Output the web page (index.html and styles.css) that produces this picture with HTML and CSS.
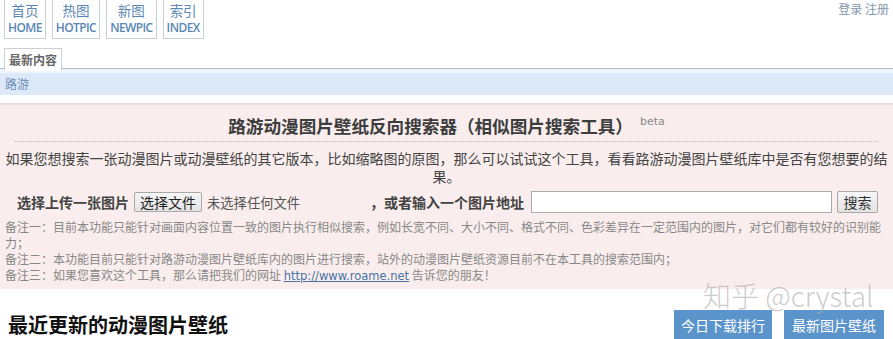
FILE: index.html
```html
<!DOCTYPE html>
<html lang="zh-CN">
<head>
<meta charset="utf-8">
<title>路游动漫图片壁纸反向搜索器</title>
<link rel="stylesheet" href="styles.css">
</head>
<body>
<div class="top">
  <ul class="nav">
    <li class="nav-item"><span class="cn">首页</span><span class="en">HOME</span></li>
    <li class="nav-item"><span class="cn">热图</span><span class="en">HOTPIC</span></li>
    <li class="nav-item"><span class="cn">新图</span><span class="en">NEWPIC</span></li>
    <li class="nav-item"><span class="cn">索引</span><span class="en">INDEX</span></li>
  </ul>
  <div class="user">登录 注册</div>
</div>
<div class="tabs"><span class="tab">最新内容</span></div>
<div class="crumb"><span class="crumb-bar">路游</span></div>

<div class="search-box">
  <h2 class="title">路游动漫图片壁纸反向搜索器（相似图片搜索工具）<sup class="beta">beta</sup></h2>
  <p class="intro">如果您想搜索一张动漫图片或动漫壁纸的其它版本，比如缩略图的原图，那么可以试试这个工具，看看路游动漫图片壁纸库中是否有您想要的结果。</p>
  <div class="form-row">
    <span class="label">选择上传一张图片</span>
    <span class="file-btn">选择文件</span>
    <span class="file-name">未选择任何文件</span>
    <span class="label label-url">，或者输入一个图片地址</span>
    <span class="url-input"></span>
    <span class="search-btn">搜索</span>
  </div>
  <div class="notes">
    <p>备注一：目前本功能只能针对画面内容位置一致的图片执行相似搜索，例如长宽不同、大小不同、格式不同、色彩差异在一定范围内的图片，对它们都有较好的识别能力；</p>
    <p>备注二：本功能目前只能针对路游动漫图片壁纸库内的图片进行搜索，站外的动漫图片壁纸资源目前不在本工具的搜索范围内；</p>
    <p>备注三：如果您喜欢这个工具，那么请把我们的网址 <a class="link" href="#">http://www.roame.net</a> 告诉您的朋友！</p>
  </div>
</div>

<div class="recent">
  <h3 class="recent-title">最近更新的动漫图片壁纸</h3>
  <div class="recent-btns">
    <span class="btn">今日下载排行</span>
    <span class="btn">最新图片壁纸</span>
  </div>
  <div class="watermark">知乎 @crystal</div>
</div>
</body>
</html>
```

FILE: styles.css
```css
* { box-sizing: border-box; }
body {
  margin: 0;
  font-family: "Noto Sans CJK SC", "Noto Sans", sans-serif;
  background: #fff;
  color: #333;
  position: relative;
}
.top {
  display: flex;
  justify-content: space-between;
  padding: 0 4px;
}
.nav {
  list-style: none;
  margin: 0;
  padding: 0;
  display: flex;
  gap: 6px;
}
.nav-item {
  display: flex;
  flex-direction: column;
  align-items: center;
  border: 1px solid #c6ced6;
  border-top: none;
  padding: 2px 3px 3px;
  height: 39px;
  color: #5a86b4;
}
.cn {
  font-size: 13.5px;
  line-height: 17px;
}
.en {
  font-family: "Open Sans", sans-serif;
  font-size: 12px;
  font-weight: 600;
  letter-spacing: -0.6px;
  line-height: 17px;
}
.user {
  font-size: 12px;
  color: #8497ad;
  line-height: 17px;
}
.tabs {
  margin-top: 7px;
  padding-left: 4px;
  border-bottom: 1px solid #aebdc8;
  height: 23px;
}
.tab {
  display: inline-block;
  height: 23px;
  border: 1px solid #c8d0d8;
  border-bottom: 1px solid #fff;
  padding: 0 4px;
  font-size: 12px;
  font-weight: bold;
  line-height: 21px;
  color: #666;
  background: #fff;
}
.crumb {
  background: #eef5fb;
  padding-top: 4px;
}
.crumb-bar {
  display: block;
  background: #dce9f8;
  height: 22px;
  line-height: 22px;
  padding-left: 5px;
  font-size: 12px;
  color: #6d8fb6;
}
.search-box {
  margin-top: 8px;
  background: #f9eeed;
  border-top: 2px solid #eddcdb;
  padding: 0 5px 5px;
}
.title {
  margin: 0 10px;
  padding: 10px 0 4px;
  text-align: center;
  font-size: 17.6px;
  line-height: 22px;
  color: #3d3d3d;
  border-bottom: 1px dotted #b9b3b3;
}
.beta {
  font-size: 11px;
  font-weight: normal;
  line-height: 0;
  color: #888;
  vertical-align: 8px;
  margin-left: 7px;
  font-family: "DejaVu Sans", sans-serif;
}
.intro {
  margin: 7px 0 0;
  text-align: center;
  font-size: 14px;
  line-height: 18px;
  color: #444;
}
.form-row {
  display: flex;
  align-items: center;
  padding-left: 12px;
  margin-top: 5px;
  height: 24px;
}
.label {
  font-size: 14px;
  font-weight: bold;
  color: #444;
}
.file-btn {
  margin-left: 5px;
  height: 20px;
  width: 68px;
  border: 1px solid #a8a8a8;
  border-radius: 2px;
  background: linear-gradient(#f6f6f6, #e3e3e3);
  font-size: 14px;
  line-height: 18px;
  text-align: center;
  color: #222;
}
.file-name {
  margin-left: 5px;
  font-size: 13.3px;
  color: #555;
}
.label-url { margin-left: 70px; }
.url-input {
  margin-left: 7px;
  width: 301px;
  height: 22px;
  border: 1px solid #aaa;
  background: #fff;
}
.search-btn {
  margin-left: 5px;
  width: 41px;
  height: 22px;
  border: 1px solid #a8a8a8;
  border-radius: 2px;
  background: linear-gradient(#f6f6f6, #e3e3e3);
  font-size: 14px;
  line-height: 20px;
  text-align: center;
  color: #333;
}
.notes {
  margin-top: 5px;
}
.notes p {
  margin: 0;
  font-size: 12px;
  line-height: 16px;
  color: #888;
}
.link {
  font-family: "DejaVu Sans", sans-serif;
  font-size: 11.5px;
  color: #4a72a6;
  text-decoration: underline;
}
.recent {
  display: flex;
  justify-content: space-between;
  align-items: flex-end;
  padding: 21px 9px 0 8px;
}
.recent-title {
  margin: 0;
  font-size: 20px;
  line-height: 30px;
  font-weight: bold;
  color: #111;
}
.recent-btns {
  display: flex;
  gap: 12px;
}
.btn {
  display: block;
  background: #5b94cb;
  color: #fff;
  font-size: 14px;
  line-height: 30px;
  height: 30px;
  padding: 0 7px;
  min-width: 98px;
  text-align: center;
}
.btn + .btn { min-width: 100px; }
.watermark {
  position: absolute;
  left: 703px;
  top: 282px;
  font-size: 28px;
  line-height: 26px;
  font-weight: 300;
  color: rgba(170, 170, 170, 0.6);
  white-space: nowrap;
  pointer-events: none;
}
```
